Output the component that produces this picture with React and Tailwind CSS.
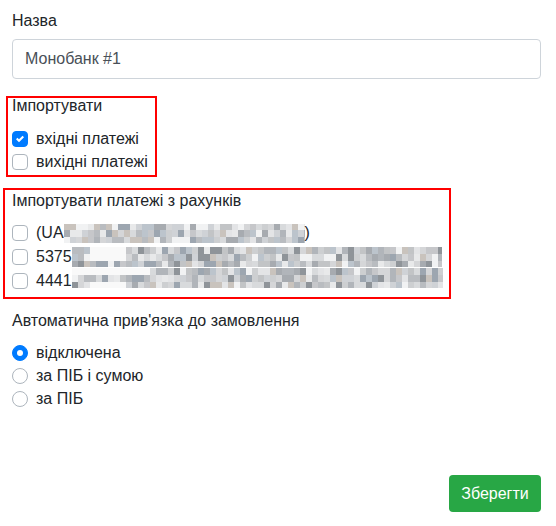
import React from "react";

function rng(seed) {
  let a = seed >>> 0;
  return () => {
    a = (a + 0x6d2b79f5) >>> 0;
    let t = a;
    t = Math.imul(t ^ (t >>> 15), t | 1);
    t ^= t + Math.imul(t ^ (t >>> 7), t | 61);
    return ((t ^ (t >>> 14)) >>> 0) / 4294967296;
  };
}

const PALETTE = [
  "#c6c7ca", "#b9bcc0", "#a7abb0", "#8f9499", "#d5d6d8", "#e3e4e6",
  "#cfd2d6", "#9da6b0", "#c9c3bd", "#f1f2f3", "#bcc4cc", "#d8dadc",
  "#c2c4c6", "#e8e9ea", "#b1b5ba", "#cdcfd1",
];

function PixelBlur({ width, seed, rows = [6, 7, 6], cell = 6, whites = [] }) {
  const r = rng(seed);
  const cols = Math.ceil(width / cell);
  const isWhite = (ri, ci) =>
    whites.some(([row, a, b]) => row === ri && ci >= a && ci <= b);
  return (
    <div className="flex flex-col shrink-0" style={{ width }}>
      {rows.map((h, ri) => (
        <div key={ri} className="flex overflow-hidden" style={{ height: h, width }}>
          {Array.from({ length: cols }).map((_, ci) => {
            const c = PALETTE[Math.floor(r() * PALETTE.length)];
            return (
              <div
                key={ci}
                className="shrink-0"
                style={{
                  width: cell,
                  height: h,
                  background: isWhite(ri, ci) ? "#f9f9f9" : c,
                }}
              />
            );
          })}
        </div>
      ))}
    </div>
  );
}

function Checkbox({ checked }) {
  return checked ? (
    <span className="w-4 h-4 rounded-[4px] bg-[#007bff] border border-[#007bff] flex items-center justify-center shrink-0">
      <svg width="8" height="8" viewBox="0 0 8 8">
        <path fill="#fff" d="M6.564.75l-3.59 3.612-1.538-1.55L0 4.26l2.974 2.99L8 2.193z" />
      </svg>
    </span>
  ) : (
    <span className="w-4 h-4 rounded-[4px] bg-white border border-[#adb5bd] shrink-0" />
  );
}

function Radio({ checked }) {
  return checked ? (
    <span className="w-4 h-4 rounded-full bg-[#007bff] border border-[#007bff] flex items-center justify-center shrink-0">
      <span className="w-[6px] h-[6px] rounded-full bg-white" />
    </span>
  ) : (
    <span className="w-4 h-4 rounded-full bg-white border border-[#adb5bd] shrink-0" />
  );
}

export default function App() {
  return (
    <div className="w-[556px] h-[526px] bg-white text-[16px] text-[#212529] font-['Liberation_Sans',Arial,sans-serif] flex flex-col pt-[9px]">
      <div className="ml-[12px] leading-[24px]">Назва</div>
      <div className="ml-[12px] mt-[6px] w-[529px] h-[40px] border border-[#ced4da] rounded-[4px] flex items-center pl-[12px] text-[#495057] leading-[24px]">
        Монобанк #1
      </div>

      <div className="ml-[6px] mt-[17px] w-[151px] border-2 border-[#ff0000] flex flex-col pb-[2px]">
        <div className="ml-[4px] leading-[16px]">Імпортувати</div>
        <div className="mt-[13px] ml-[4px] h-[23px] flex items-center gap-[8px] leading-[24px]">
          <Checkbox checked />
          <span>вхідні платежі</span>
        </div>
        <div className="ml-[4px] h-[23px] flex items-center gap-[8px] leading-[24px]">
          <Checkbox />
          <span>вихідні платежі</span>
        </div>
      </div>

      <div className="ml-[3px] mt-[11px] w-[448px] border-2 border-[#ff0000] flex flex-col pt-[3px] pb-[4px]">
        <div className="ml-[7px] leading-[16px]">Імпортувати платежі з рахунків</div>
        <div className="mt-[12px] ml-[7px] h-[24px] flex items-center leading-[24px]">
          <Checkbox />
          <span className="ml-[8px]">(UA</span>
          <PixelBlur width={241} seed={11} rows={[6, 7, 6]} />
          <span>)</span>
        </div>
        <div className="ml-[7px] h-[24px] flex items-center leading-[24px]">
          <Checkbox />
          <span className="ml-[8px]">5375</span>
          <PixelBlur
            width={370}
            seed={23}
            rows={[7, 7, 6]}
            whites={[[0, 3, 8], [1, 3, 8]]}
          />
        </div>
        <div className="ml-[7px] h-[24px] flex items-center leading-[24px]">
          <Checkbox />
          <span className="ml-[8px]">4441</span>
          <div className="mb-[6px]">
            <PixelBlur
              width={371}
              seed={37}
              rows={[7, 7, 6]}
              whites={[[0, 0, 12], [2, 3, 8]]}
            />
          </div>
        </div>
      </div>

      <div className="ml-[12px] mt-[10px] leading-[24px]">Автоматична прив'язка до замовлення</div>
      <div className="ml-[12px] mt-[8px] flex flex-col leading-[24px]">
        <div className="h-[23px] flex items-center gap-[8px]">
          <Radio checked />
          <span>відключена</span>
        </div>
        <div className="h-[23px] flex items-center gap-[8px]">
          <Radio />
          <span>за ПІБ і сумою</span>
        </div>
        <div className="h-[23px] flex items-center gap-[8px]">
          <Radio />
          <span>за ПІБ</span>
        </div>
      </div>

      <div className="flex justify-end pr-[15px] mt-[65px]">
        <button className="w-[92px] h-[37px] rounded-[4px] bg-[#28a745] text-white leading-[24px] flex items-center justify-center">
          Зберегти
        </button>
      </div>
    </div>
  );
}
